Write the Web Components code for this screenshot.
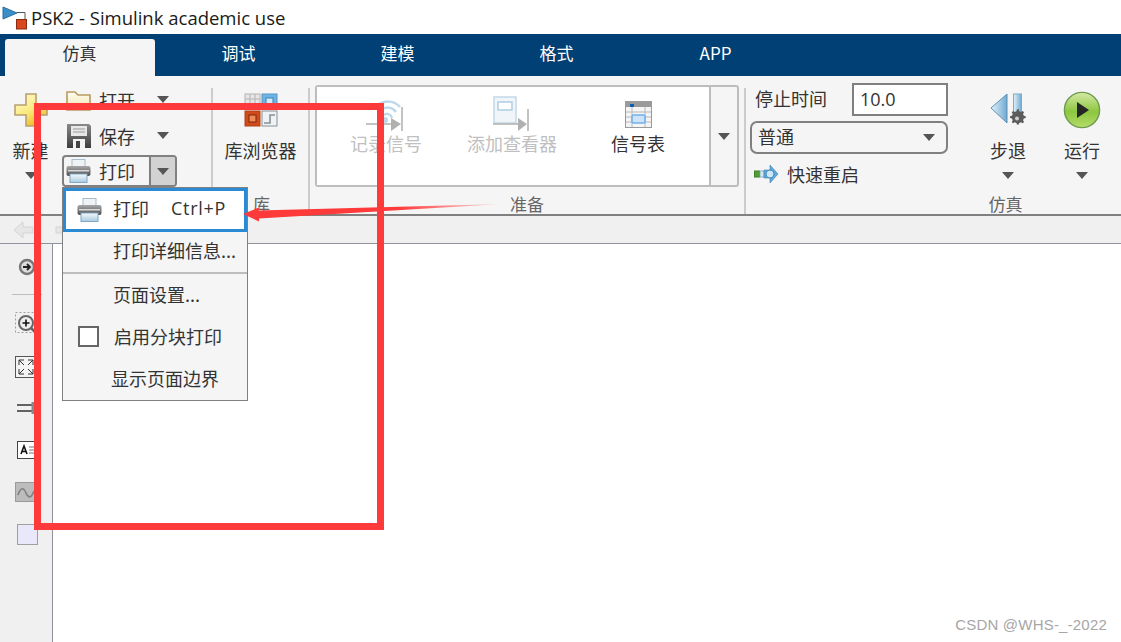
<!DOCTYPE html>
<html>
<head>
<meta charset="utf-8">
<title>PSK2 - Simulink academic use</title>
<style>
  body {
    background: #ffffff;
    margin: 0;
    overflow: hidden;
  }
</style>
</head>
<body>

<psk-app>
  <psk-title-bar title-text="PSK2 - Simulink academic use"></psk-title-bar>
  <psk-tab-strip>
    <psk-tab label="仿真" selected></psk-tab>
    <psk-tab label="调试"></psk-tab>
    <psk-tab label="建模"></psk-tab>
    <psk-tab label="格式"></psk-tab>
    <psk-tab label="APP"></psk-tab>
  </psk-tab-strip>
  <psk-ribbon>
    <psk-section width="212">
      <psk-big-button label="新建" icon="new" arrow width="61"></psk-big-button>
      <psk-file-group>
        <psk-small-button label="打开" icon="open"></psk-small-button>
        <psk-small-button label="保存" icon="save"></psk-small-button>
        <psk-small-button label="打印" icon="print" split></psk-small-button>
      </psk-file-group>
    </psk-section>
    <psk-section width="97" label="库" label-offset="1">
      <psk-big-button label="库浏览器" icon="library" width="97"></psk-big-button>
    </psk-section>
    <psk-section width="436" label="准备" label-offset="0">
      <psk-gallery>
        <psk-gallery-item label="记录信号" icon="record" disabled></psk-gallery-item>
        <psk-gallery-item label="添加查看器" icon="viewer" disabled></psk-gallery-item>
        <psk-gallery-item label="信号表" icon="table"></psk-gallery-item>
      </psk-gallery>
    </psk-section>
    <psk-section width="376" label="仿真" label-offset="72.5" last>
      <psk-sim-options></psk-sim-options>
      <psk-big-button label="步退" icon="step" arrow width="74"></psk-big-button>
      <psk-big-button label="运行" icon="run" arrow width="74"></psk-big-button>
    </psk-section>
  </psk-ribbon>
  <psk-tool-strip></psk-tool-strip>
  <psk-workspace>
    <psk-side-bar></psk-side-bar>
    <psk-canvas></psk-canvas>
  </psk-workspace>
  <psk-print-menu>
    <psk-menu-item label="打印" shortcut="Ctrl+P" icon="print" active></psk-menu-item>
    <psk-menu-item label="打印详细信息..." divided></psk-menu-item>
    <psk-menu-item label="页面设置..."></psk-menu-item>
    <psk-menu-item label="启用分块打印" check></psk-menu-item>
    <psk-menu-item label="显示页面边界" inset="-2"></psk-menu-item>
  </psk-print-menu>
  <psk-markup></psk-markup>
  <psk-watermark>CSDN @WHS-_-2022</psk-watermark>
</psk-app>

<script>
  const CJK = `'Noto Sans CJK SC', 'Noto Sans', sans-serif`;

  const ICONS = {
    new: /* svg */ `
      <svg width="34" height="34" viewBox="0 0 34 34">
        <defs><linearGradient id="n" x1="0" y1="0" x2="0.6" y2="1"><stop offset="0" stop-color="#fffde0"/><stop offset="0.6" stop-color="#fbe97a"/><stop offset="1" stop-color="#eebb22"/></linearGradient></defs>
        <path d="M12 1h10v11h11v10H22v11H12V22H1V12h11z" fill="url(#n)" stroke="#b8a070" stroke-width="1.6"/>
      </svg>`,
    open: /* svg */ `
      <svg width="25" height="22" viewBox="0 0 25 22">
        <defs><linearGradient id="f" x1="0" y1="0" x2="0" y2="1"><stop offset="0" stop-color="#fffdf0"/><stop offset="1" stop-color="#f0e2b0"/></linearGradient></defs>
        <path d="M1 3h8l3 3h12v15H1z" fill="url(#f)" stroke="#b89a62" stroke-width="1.6"/>
      </svg>`,
    save: /* svg */ `
      <svg width="24" height="24" viewBox="0 0 24 24">
        <defs><linearGradient id="s" x1="0" y1="0" x2="0" y2="1"><stop offset="0" stop-color="#8a8a8a"/><stop offset="1" stop-color="#3c3c3c"/></linearGradient></defs>
        <path d="M0 0h22l2 2v22H0z" fill="url(#s)"/>
        <rect x="4" y="2" width="16" height="10" fill="#e8e8e8"/>
        <path d="M6 5h12M6 8h12" stroke="#9a9a9a" stroke-width="1"/>
        <rect x="6" y="15" width="12" height="9" fill="#f2f2f2"/>
        <rect x="9" y="17" width="4" height="7" fill="#444444"/>
      </svg>`,
    print: /* svg */ `
      <svg width="25" height="24" viewBox="0 0 25 24">
        <defs>
          <linearGradient id="p" x1="0" y1="0" x2="0" y2="1"><stop offset="0" stop-color="#a8a8a8"/><stop offset="1" stop-color="#4e4e4e"/></linearGradient>
          <linearGradient id="q" x1="0" y1="0" x2="0" y2="1"><stop offset="0" stop-color="#f6fafc"/><stop offset="1" stop-color="#a8cbe0"/></linearGradient>
        </defs>
        <rect x="6" y="0.5" width="13" height="8" fill="#eef3f6" stroke="#a8bccb"/>
        <rect x="0.5" y="7" width="24" height="10" rx="2" fill="url(#p)"/>
        <rect x="2" y="11" width="21" height="1.5" fill="#d8d8d8"/>
        <rect x="4" y="15" width="17" height="8.5" fill="url(#q)" stroke="#7fa8c4"/>
      </svg>`,
    library: /* svg */ `
      <svg width="34" height="34" viewBox="0 0 34 34">
        <rect x="1" y="1" width="15" height="15" fill="#e6e6e6" stroke="#b4b4b4"/>
        <path d="M6 1v15M11 1v15M1 6h15" stroke="#b4b4b4" fill="none"/>
        <rect x="18" y="1" width="15" height="15" fill="#6db4e6" stroke="#5a94c4"/>
        <rect x="22" y="5" width="7" height="6" fill="#d4ecfa" stroke="#3f80b0"/>
        <rect x="1" y="18" width="15" height="15" fill="#d14a1c" stroke="#b04016"/>
        <rect x="5" y="22" width="7" height="7" fill="#ee8a55" stroke="#7a2608"/>
        <rect x="18" y="18" width="15" height="15" fill="#eef3f6" stroke="#8a8f94"/>
        <path d="M20 30h6v-8h5" stroke="#8a8f94" stroke-width="1.6" fill="none"/>
      </svg>`,
    record: /* svg */ `
      <svg width="40" height="36" viewBox="0 0 40 36">
        <g fill="none" stroke="#bcd8ea" stroke-width="2.4">
          <path d="M12 9a16 16 0 0 1 22 2"/>
          <path d="M15 14a10 10 0 0 1 15 2"/>
          <path d="M18 19a5 5 0 0 1 8 3"/>
        </g>
        <circle cx="19" cy="24" r="3" fill="#bcd8ea"/>
        <path d="M0 28h26" stroke="#b4b4b4" stroke-width="1.6"/>
        <path d="M25 22l10 6-10 7z" fill="#b0b0b0"/>
        <path d="M36 11v24" stroke="#b4b4b4" stroke-width="1.6"/>
      </svg>`,
    viewer: /* svg */ `
      <svg width="38" height="36" viewBox="0 0 38 36">
        <rect x="1" y="1" width="22" height="26" fill="#f0f5f9" stroke="#c6dbe9" stroke-width="1.6"/>
        <rect x="5" y="6" width="14" height="8" fill="#ffffff" stroke="#a8cce4" stroke-width="1.4"/>
        <path d="M0 28h26" stroke="#b4b4b4" stroke-width="1.6"/>
        <path d="M25 22l9 6-9 7z" fill="#b0b0b0"/>
        <path d="M35 13v22" stroke="#b4b4b4" stroke-width="1.6"/>
      </svg>`,
    table: /* svg */ `
      <svg width="27" height="27" viewBox="0 0 27 27">
        <rect x="0.5" y="0.5" width="26" height="26" fill="#f4f4f4" stroke="#9a9a9a"/>
        <rect x="1" y="1" width="25" height="5" fill="#9a9a9a"/>
        <rect x="5" y="3" width="4" height="3" fill="#0a5fb4"/>
        <path d="M1 11h25M1 16h25M1 21h25M7 6v20M20 6v20" stroke="#b8b8b8" fill="none"/>
        <rect x="7" y="14" width="13" height="8" rx="1.5" fill="#cfe3f8" stroke="#6fb0ee" stroke-width="1.6"/>
      </svg>`,
    step: /* svg */ `
      <svg width="36" height="34" viewBox="0 0 36 34">
        <defs><linearGradient id="b" x1="0" y1="0" x2="1" y2="0"><stop offset="0" stop-color="#e4f2fb"/><stop offset="1" stop-color="#6fa9d0"/></linearGradient></defs>
        <path d="M1 15L17 1v29z" fill="url(#b)" stroke="#5a93b8"/>
        <rect x="23.500" y="1" width="8" height="20" fill="url(#b)" stroke="#7fa9c4"/>
        <path d="M27 19l2 0 .5 2 1.800.8 1.700-1 1.400 1.400-1 1.700.8 1.800 2 .5v2l-2 .5-.8 1.800 1 1.700-1.400 1.400-1.700-1-1.800.8-.5 1.600h-2l-.5-1.600-1.800-.8-1.700 1-1.400-1.400 1-1.700-.8-1.800-2-.5v-2l2-.5.8-1.800-1-1.700 1.400-1.400 1.700 1 1.800-.8z" fill="#5c5c5c" transform="translate(1 -2) scale(.96)"/>
        <circle cx="27" cy="25.500" r="2" fill="#cfcfcf"/>
      </svg>`,
    run: /* svg */ `
      <svg width="38" height="38" viewBox="0 0 38 38">
        <defs><linearGradient id="r" x1="0" y1="0" x2="0" y2="1"><stop offset="0" stop-color="#d6eaa6"/><stop offset="0.55" stop-color="#8cc63f"/><stop offset="1" stop-color="#b5dc6a"/></linearGradient></defs>
        <circle cx="19" cy="19" r="17.6" fill="url(#r)" stroke="#6f9a50" stroke-width="1.4"/>
        <path d="M14 11l12 8-12 8z" fill="#262626"/>
      </svg>`,
    restart: /* svg */ `
      <svg width="25" height="22" viewBox="0 0 25 22">
        <rect x="0.500" y="8" width="5" height="6" fill="#4fa030" stroke="#3f7f2a"/>
        <rect x="6" y="8" width="4" height="6" fill="#d8e8f2" stroke="#8ab0c8"/>
        <path d="M10 7h6V2l8 9-8 9v-5h-6z" fill="#5fa8dc" stroke="#3f80b0" stroke-width="0.6"/>
        <circle cx="16" cy="11" r="4" fill="#cfe6f6" stroke="#4a8cbc"/>
      </svg>`
  };

  // Small downward triangle used all over the ribbon
  const ARROW = /* html */ `<svg width="12" height="7" viewBox="0 0 12 7" style="display: block;"><path d="M0 0h12L6 7z" fill="#555555"/></svg>`;

  class PskApp extends HTMLElement {
    constructor() {
      super();

      this.attachShadow( {mode: 'open'} );
      this.shadowRoot.innerHTML = /* template */ `
        <style>
          :host {
            display: flex;
            flex-direction: column;
            height: 642px;
            overflow: hidden;
            position: relative;
            width: 1121px;
          }
        </style>
        <slot></slot>
      `;
    }
  }

  class PskTitleBar extends HTMLElement {
    constructor() {
      super();

      this.attachShadow( {mode: 'open'} );
      this.shadowRoot.innerHTML = /* template */ `
        <style>
          :host {
            align-items: center;
            background: #ffffff;
            box-sizing: border-box;
            color: #1a1a1a;
            display: flex;
            flex: none;
            font-family: 'Open Sans', sans-serif;
            font-size: 18.5px;
            gap: 2px;
            height: 34px;
            padding: 0 0 0 2px;
          }
        </style>
        <svg width="27" height="27" viewBox="0 0 27 27">
          <path d="M1 3l14 6-14 6z" fill="#3a8fc8" stroke="#2a6f9f"/>
          <path d="M15 8.500h8v7" fill="none" stroke="#555555"/>
          <rect x="14.500" y="15.500" width="10" height="9.500" fill="#d8481c" stroke="#8a2c10"/>
        </svg>
        <span></span>
      `;
      this.shadowRoot.querySelector( 'span' ).textContent = this.getAttribute( 'title-text' );
    }
  }

  class PskTabStrip extends HTMLElement {
    constructor() {
      super();

      this.attachShadow( {mode: 'open'} );
      this.shadowRoot.innerHTML = /* template */ `
        <style>
          :host {
            background: #004074;
            display: flex;
            flex: none;
            height: 42px;
          }
        </style>
        <slot></slot>
      `;
    }
  }

  class PskTab extends HTMLElement {
    constructor() {
      super();

      this.attachShadow( {mode: 'open'} );
      this.shadowRoot.innerHTML = /* template */ `
        <style>
          :host {
            box-sizing: border-box;
            color: #ffffff;
            display: flex;
            font-family: ${CJK};
            font-size: 17px;
            height: 42px;
            justify-content: center;
            padding: 5px 0 0 0;
            width: 159px;
          }

          span {
            border-radius: 3px 3px 0 0;
            box-sizing: border-box;
            line-height: 27px;
            text-align: center;
            width: 150px;
          }

          :host( [selected] ) span {
            background: #f5f5f5;
            color: #333333;
          }
        </style>
        <span></span>
      `;
      this.shadowRoot.querySelector( 'span' ).textContent = this.getAttribute( 'label' );
    }
  }

  class PskRibbon extends HTMLElement {
    constructor() {
      super();

      this.attachShadow( {mode: 'open'} );
      this.shadowRoot.innerHTML = /* template */ `
        <style>
          :host {
            background: #f5f5f5;
            border-bottom: 2px solid #808080;
            box-sizing: border-box;
            display: flex;
            flex: none;
            height: 140px;
          }
        </style>
        <slot></slot>
      `;
    }
  }

  class PskSection extends HTMLElement {
    constructor() {
      super();

      this.attachShadow( {mode: 'open'} );
      this.shadowRoot.innerHTML = /* template */ `
        <style>
          :host {
            box-sizing: border-box;
            display: block;
            flex: none;
            height: 138px;
            position: relative;
          }

          :host::after {
            background: #cccccc;
            bottom: 0;
            content: '';
            position: absolute;
            right: -1px;
            top: 12px;
            width: 2px;
          }

          :host( [last] )::after {
            display: none;
          }

          main {
            display: flex;
            height: 115px;
          }

          footer {
            color: #666666;
            font-family: ${CJK};
            font-size: 17px;
            height: 23px;
            line-height: 26px;
            text-align: center;
          }
        </style>
        <main><slot></slot></main>
        <footer></footer>
      `;
      this.style.width = `${this.getAttribute( 'width' )}px`;
      const footer = this.shadowRoot.querySelector( 'footer' );
      footer.textContent = this.getAttribute( 'label' );
      footer.style.paddingLeft = `${this.getAttribute( 'label-offset' ) * 2}px`;
    }
  }

  class PskIcon extends HTMLElement {
    constructor() {
      super();

      this.attachShadow( {mode: 'open'} );
      this.shadowRoot.innerHTML = /* template */ `
        <style>
          :host {
            align-items: center;
            display: flex;
            justify-content: center;
          }

          svg {
            display: block;
          }
        </style>
        ${ICONS[this.getAttribute( 'name' )]}
      `;
    }
  }

  class PskBigButton extends HTMLElement {
    constructor() {
      super();

      this.attachShadow( {mode: 'open'} );
      this.shadowRoot.innerHTML = /* template */ `
        <style>
          :host {
            align-items: center;
            box-sizing: border-box;
            color: #333333;
            display: flex;
            flex: none;
            flex-direction: column;
            font-family: ${CJK};
            font-size: 18px;
            padding: 14px 0 0 0;
          }

          psk-icon {
            height: 40px;
          }

          span {
            line-height: 20px;
            margin: 10px 0 0 0;
            white-space: nowrap;
          }

          i {
            display: block;
            margin: 12px 0 0 0;
          }
        </style>
        <psk-icon name="${this.getAttribute( 'icon' )}"></psk-icon>
        <span></span>
        ${this.hasAttribute( 'arrow' ) ? `<i>${ARROW}</i>` : ''}
      `;
      this.style.width = `${this.getAttribute( 'width' )}px`;
      this.shadowRoot.querySelector( 'span' ).textContent = this.getAttribute( 'label' );
    }
  }

  class PskFileGroup extends HTMLElement {
    constructor() {
      super();

      this.attachShadow( {mode: 'open'} );
      this.shadowRoot.innerHTML = /* template */ `
        <style>
          :host {
            display: flex;
            flex: none;
            flex-direction: column;
            gap: 3px;
            margin: 0 0 0 1px;
            padding: 7px 0 0 0;
          }
        </style>
        <slot></slot>
      `;
    }
  }

  class PskSmallButton extends HTMLElement {
    constructor() {
      super();

      this.attachShadow( {mode: 'open'} );
      this.shadowRoot.innerHTML = /* template */ `
        <style>
          :host {
            align-items: center;
            border: 2px solid transparent;
            border-radius: 4px;
            box-sizing: border-box;
            color: #333333;
            display: flex;
            font-family: ${CJK};
            font-size: 18px;
            height: 33px;
            width: 115px;
          }

          :host( [split] ) {
            border-color: #808080;
            height: 32px;
          }

          psk-icon {
            margin: 0 0 0 2px;
            width: 25px;
          }

          span {
            flex-grow: 1;
            line-height: 20px;
            margin: 0 0 0 8px;
          }

          i {
            align-items: center;
            align-self: stretch;
            display: flex;
            justify-content: center;
            width: 24px;
          }

          :host( [split] ) i {
            background: #d2d2d2;
            border-left: 2px solid #808080;
            border-radius: 0 2px 2px 0;
          }
        </style>
        <psk-icon name="${this.getAttribute( 'icon' )}"></psk-icon>
        <span></span>
        <i>${ARROW}</i>
      `;
      this.shadowRoot.querySelector( 'span' ).textContent = this.getAttribute( 'label' );
    }
  }

  class PskGallery extends HTMLElement {
    constructor() {
      super();

      this.attachShadow( {mode: 'open'} );
      this.shadowRoot.innerHTML = /* template */ `
        <style>
          :host {
            border: 2px solid #bdbdbd;
            border-radius: 3px;
            box-sizing: border-box;
            display: flex;
            height: 102px;
            margin: 9px 0 0 6px;
            width: 424px;
          }

          main {
            background: #ffffff;
            box-sizing: border-box;
            display: flex;
            padding: 0 0 0 6px;
            width: 392px;
          }

          aside {
            align-items: center;
            border-left: 2px solid #bdbdbd;
            display: flex;
            flex-grow: 1;
            justify-content: center;
          }
        </style>
        <main><slot></slot></main>
        <aside>${ARROW}</aside>
      `;
    }
  }

  class PskGalleryItem extends HTMLElement {
    constructor() {
      super();

      this.attachShadow( {mode: 'open'} );
      this.shadowRoot.innerHTML = /* template */ `
        <style>
          :host {
            align-items: center;
            color: #333333;
            display: flex;
            flex-direction: column;
            font-family: ${CJK};
            font-size: 18px;
            padding: 9px 0 0 0;
            width: 126px;
          }

          :host( [disabled] ) {
            color: #c0c0c0;
          }

          psk-icon {
            height: 36px;
          }

          span {
            line-height: 20px;
            margin: 1px 0 0 0;
          }
        </style>
        <psk-icon name="${this.getAttribute( 'icon' )}"></psk-icon>
        <span></span>
      `;
      this.shadowRoot.querySelector( 'span' ).textContent = this.getAttribute( 'label' );
    }
  }

  class PskSimOptions extends HTMLElement {
    constructor() {
      super();

      this.attachShadow( {mode: 'open'} );
      this.shadowRoot.innerHTML = /* template */ `
        <style>
          :host {
            box-sizing: border-box;
            color: #333333;
            display: flex;
            flex: none;
            flex-direction: column;
            font-family: ${CJK};
            font-size: 18px;
            line-height: 20px;
            padding: 7px 23px 0 5px;
            width: 226px;
          }

          .stop {
            align-items: center;
            display: flex;
            justify-content: space-between;
            padding: 0 0 0 5px;
          }

          .stop span {
            margin: 0 0 4px 0;
          }

          .input {
            background: #ffffff;
            border: 2px solid #808080;
            box-sizing: border-box;
            font-family: 'Open Sans', sans-serif;
            height: 33px;
            line-height: 29px;
            padding: 0 0 0 6px;
            width: 96px;
          }

          .select {
            align-items: center;
            border: 2px solid #808080;
            border-radius: 7px;
            box-sizing: border-box;
            display: flex;
            height: 33px;
            justify-content: space-between;
            margin: 5px 0 0 0;
            padding: 0 11px 0 6px;
          }

          .select span {
            margin: 0 0 4px 0;
          }

          .restart {
            align-items: center;
            display: flex;
            gap: 8px;
            margin: 9px 0 0 4px;
          }
        </style>
        <div class="stop"><span>停止时间</span><div class="input">10.0</div></div>
        <div class="select"><span>普通</span>${ARROW}</div>
        <div class="restart"><psk-icon name="restart"></psk-icon><span>快速重启</span></div>
      `;
    }
  }

  class PskToolStrip extends HTMLElement {
    constructor() {
      super();

      this.attachShadow( {mode: 'open'} );
      this.shadowRoot.innerHTML = /* template */ `
        <style>
          :host {
            align-items: center;
            background: #f0f0f0;
            border-bottom: 1px solid #8e939b;
            box-sizing: border-box;
            display: flex;
            flex: none;
            gap: 21px;
            height: 28px;
            padding: 0 0 0 13px;
          }

          svg {
            display: block;
          }
        </style>
        <svg width="21" height="18" viewBox="0 0 21 18"><path d="M1 9l9-8v5h10v6H10v5z" fill="#e6e6e6" stroke="#d4d4d4"/></svg>
        <svg width="21" height="18" viewBox="0 0 21 18"><path d="M20 9l-9-8v5H1v6h10v5z" fill="#e6e6e6" stroke="#d4d4d4"/></svg>
      `;
    }
  }

  class PskWorkspace extends HTMLElement {
    constructor() {
      super();

      this.attachShadow( {mode: 'open'} );
      this.shadowRoot.innerHTML = /* template */ `
        <style>
          :host {
            display: flex;
            flex-grow: 1;
            min-height: 0;
          }
        </style>
        <slot></slot>
      `;
    }
  }

  class PskSideBar extends HTMLElement {
    constructor() {
      super();

      this.attachShadow( {mode: 'open'} );
      this.shadowRoot.innerHTML = /* template */ `
        <style>
          :host {
            align-items: flex-start;
            background: #f0f0f0;
            border-right: 1px solid #8e939b;
            box-sizing: border-box;
            display: flex;
            flex: none;
            flex-direction: column;
            padding: 14px 0 0 0;
            width: 53px;
          }

          svg {
            display: block;
            flex: none;
          }

          hr {
            background: #bdbdbd;
            border: none;
            height: 1px;
            margin: 18px 0 17px 12px;
            width: 30px;
          }
        </style>
        <svg width="18" height="18" viewBox="0 0 18 18" style="margin-left: 18px;"><circle cx="9" cy="9" r="7" fill="#dcdcdc" stroke="#777777" stroke-width="2.400"/><path d="M5 9h7M9 6l3 3-3 3" stroke="#222222" stroke-width="1.800" fill="none"/></svg>
        <hr>
        <svg width="21" height="24" viewBox="0 0 21 24" style="margin-left: 15px;"><rect x="0.500" y="0.500" width="20" height="20" fill="none" stroke="#a0a0a0" stroke-dasharray="2 2"/><circle cx="11" cy="11" r="7" fill="#eeeeee" stroke="#666666" stroke-width="2"/><path d="M7.500 11h7M11 7.500v7" stroke="#111111" stroke-width="1.600"/><path d="M16 16l4 4" stroke="#666666" stroke-width="2.500"/></svg>
        <svg width="22" height="22" viewBox="0 0 22 22" style="margin: 20px 0 0 15px;"><rect x="0.500" y="0.500" width="21" height="21" fill="#f4f4f4" stroke="#555555"/><path d="M4 9V4h5M4 4l5 5M18 9V4h-5M18 4l-5 5M4 13v5h5M4 18l5-5M18 13v5h-5M18 18l-5-5" stroke="#333333" fill="none"/></svg>
        <svg width="20" height="16" viewBox="0 0 20 16" style="margin: 22px 0 0 17px;"><path d="M0 5h16M0 11h16" stroke="#333333" stroke-width="1.600"/><path d="M16 2v12" stroke="#888888" stroke-width="3"/></svg>
        <svg width="20" height="18" viewBox="0 0 20 18" style="margin: 25px 0 0 17px;"><rect x="0.500" y="0.500" width="19" height="17" fill="#ffffff" stroke="#444444"/><path d="M4 13l3-8 3 8M5 10.500h4" stroke="#111111" stroke-width="1.600" fill="none"/><path d="M12 6h6M12 9h6M12 12h6" stroke="#777777"/></svg>
        <svg width="22" height="20" viewBox="0 0 22 20" style="margin: 23px 0 0 15px;"><rect x="0.500" y="0.500" width="21" height="19" fill="#bcbcbc" stroke="#9a9a9a"/><path d="M3 13c3-9 6-7 8-2s5 6 8-2" stroke="#808080" stroke-width="1.600" fill="none"/></svg>
        <svg width="21" height="21" viewBox="0 0 21 21" style="margin: 22px 0 0 17px;"><rect x="0.500" y="0.500" width="20" height="20" fill="#e8e8fa" stroke="#a0a0a0"/></svg>
      `;
    }
  }

  class PskCanvas extends HTMLElement {
    constructor() {
      super();

      this.attachShadow( {mode: 'open'} );
      this.shadowRoot.innerHTML = /* template */ `
        <style>
          :host {
            background: #ffffff;
            display: block;
            flex-grow: 1;
          }
        </style>
      `;
    }
  }

  class PskPrintMenu extends HTMLElement {
    constructor() {
      super();

      this.attachShadow( {mode: 'open'} );
      this.shadowRoot.innerHTML = /* template */ `
        <style>
          :host {
            background: #f5f5f5;
            border: 1px solid #808080;
            box-sizing: border-box;
            display: flex;
            flex-direction: column;
            height: 214px;
            left: 62px;
            position: absolute;
            top: 187px;
            width: 186px;
          }
        </style>
        <slot></slot>
      `;
    }
  }

  class PskMenuItem extends HTMLElement {
    constructor() {
      super();

      this.attachShadow( {mode: 'open'} );
      this.shadowRoot.innerHTML = /* template */ `
        <style>
          :host {
            align-items: center;
            box-sizing: border-box;
            color: #333333;
            display: flex;
            flex: none;
            font-family: ${CJK};
            font-size: 18px;
            height: 42px;
            white-space: nowrap;
          }

          :host( [active] ) {
            background: #ffffff;
            border: 3px solid #2a8ad4;
            height: 44px;
          }

          :host( [divided] ) {
            border-bottom: 2px solid #bdbdbd;
          }

          .label {
            margin: 0 0 2px 0;
          }

          :host( [active] ) .label,
          :host( [divided] ) .label {
            margin: 0 0 4px 0;
          }

          :host( [check] ) .label {
            margin: 0 0 2px 1px;
          }

          .lead {
            align-items: center;
            display: flex;
            flex: none;
            justify-content: center;
            width: 50px;
          }

          :host( [active] ) .lead {
            margin: 0 0 0 -1px;
            width: 48px;
          }

          .check {
            background: #ffffff;
            border: 2px solid #666666;
            box-sizing: border-box;
            height: 21px;
            margin: 0 0 2px 1px;
            width: 21px;
          }

          .shortcut {
            font-family: 'Open Sans', sans-serif;
            letter-spacing: 0.7px;
            margin: 0 0 4px 22px;
          }
        </style>
        <div class="lead">
          ${this.hasAttribute( 'icon' ) ? `<psk-icon name="${this.getAttribute( 'icon' )}"></psk-icon>` : ''}
          ${this.hasAttribute( 'check' ) ? '<div class="check"></div>' : ''}
        </div>
        <span class="label"></span>
        ${this.hasAttribute( 'shortcut' ) ? '<span class="shortcut"></span>' : ''}
      `;
      this.shadowRoot.querySelector( '.label' ).textContent = this.getAttribute( 'label' );

      if( this.hasAttribute( 'shortcut' ) ) {
        this.shadowRoot.querySelector( '.shortcut' ).textContent = this.getAttribute( 'shortcut' );
      }

      if( this.hasAttribute( 'inset' ) ) {
        this.shadowRoot.querySelector( '.label' ).style.marginLeft = `${this.getAttribute( 'inset' )}px`;
      }
    }
  }

  // Red annotation drawn over the screenshot, its place is the content
  class PskMarkup extends HTMLElement {
    constructor() {
      super();

      this.attachShadow( {mode: 'open'} );
      this.shadowRoot.innerHTML = /* template */ `
        <style>
          :host {
            display: block;
            height: 642px;
            left: 0;
            pointer-events: none;
            position: absolute;
            top: 0;
            width: 1121px;
          }

          .box {
            border: 7px solid #fe3a3a;
            box-sizing: border-box;
            height: 427px;
            left: 34px;
            position: absolute;
            top: 103px;
            width: 350px;
          }

          svg {
            left: 0;
            position: absolute;
            top: 0;
          }
        </style>
        <div class="box"></div>
        <svg width="1121" height="642" viewBox="0 0 1121 642">
          <defs>
            <linearGradient id="a" x1="243" y1="0" x2="502" y2="0" gradientUnits="userSpaceOnUse">
              <stop offset="0" stop-color="#fe3a3a"/>
              <stop offset="0.6" stop-color="#fe3a3a"/>
              <stop offset="1" stop-color="#fe3a3a" stop-opacity="0.1"/>
            </linearGradient>
          </defs>
          <path d="M243 214L260 207L258.500 210.500L502 204L259 218.500L259 221.500z" fill="url(#a)"/>
        </svg>
      `;
    }
  }

  class PskWatermark extends HTMLElement {
    constructor() {
      super();

      this.attachShadow( {mode: 'open'} );
      this.shadowRoot.innerHTML = /* template */ `
        <style>
          :host {
            bottom: 7px;
            color: #a6a6a6;
            display: block;
            font-family: 'Liberation Sans', sans-serif;
            font-size: 15px;
            letter-spacing: 0.2px;
            line-height: 20px;
            position: absolute;
            right: 14px;
          }
        </style>
        <slot></slot>
      `;
    }
  }

  window.customElements.define( 'psk-icon', PskIcon );
  window.customElements.define( 'psk-app', PskApp );
  window.customElements.define( 'psk-title-bar', PskTitleBar );
  window.customElements.define( 'psk-tab-strip', PskTabStrip );
  window.customElements.define( 'psk-tab', PskTab );
  window.customElements.define( 'psk-ribbon', PskRibbon );
  window.customElements.define( 'psk-section', PskSection );
  window.customElements.define( 'psk-big-button', PskBigButton );
  window.customElements.define( 'psk-file-group', PskFileGroup );
  window.customElements.define( 'psk-small-button', PskSmallButton );
  window.customElements.define( 'psk-gallery', PskGallery );
  window.customElements.define( 'psk-gallery-item', PskGalleryItem );
  window.customElements.define( 'psk-sim-options', PskSimOptions );
  window.customElements.define( 'psk-tool-strip', PskToolStrip );
  window.customElements.define( 'psk-workspace', PskWorkspace );
  window.customElements.define( 'psk-side-bar', PskSideBar );
  window.customElements.define( 'psk-canvas', PskCanvas );
  window.customElements.define( 'psk-print-menu', PskPrintMenu );
  window.customElements.define( 'psk-menu-item', PskMenuItem );
  window.customElements.define( 'psk-markup', PskMarkup );
  window.customElements.define( 'psk-watermark', PskWatermark );
</script>
</body>
</html>
